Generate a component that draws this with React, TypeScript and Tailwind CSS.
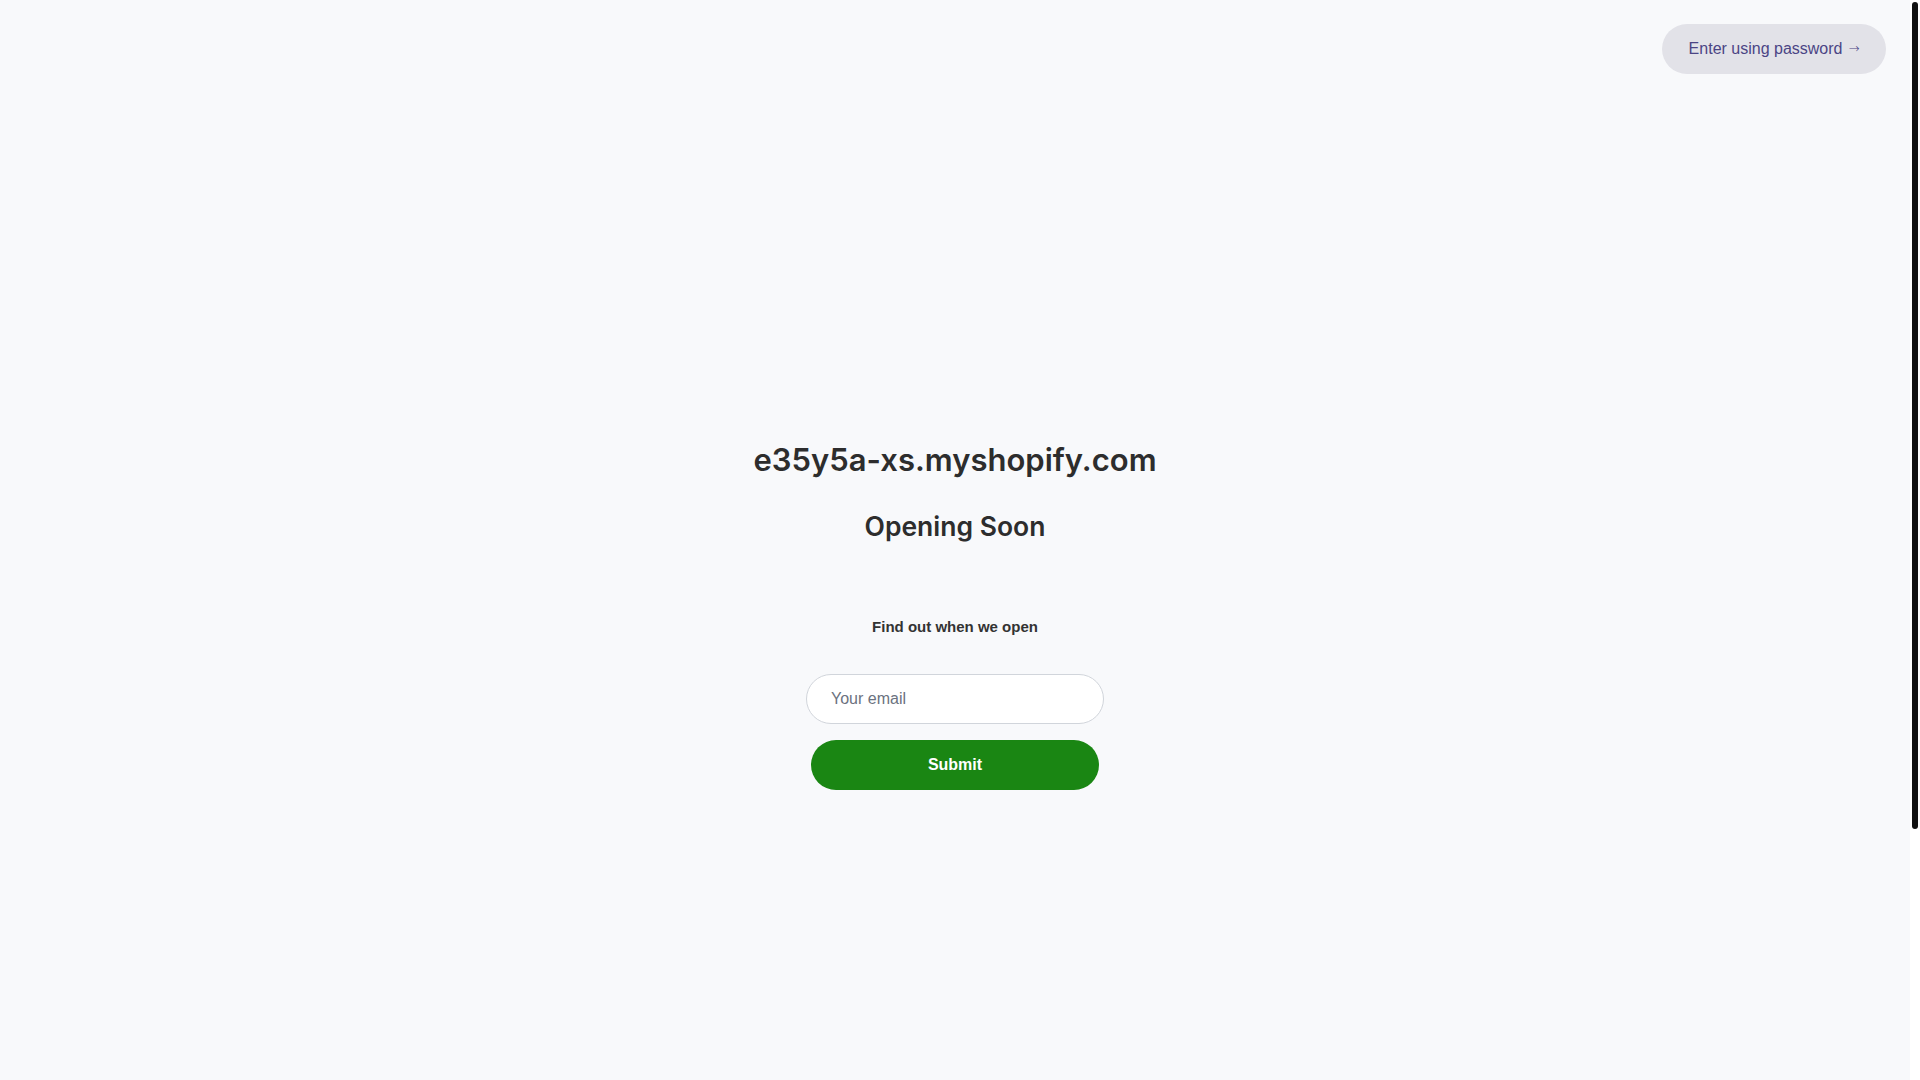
import React from 'react';

export default function App() {
  return (
    <div className="flex h-screen overflow-hidden bg-[#f8f9fb] font-['Liberation_Sans',Arial,sans-serif]">
      <div className="flex-1">
        {/* Top bar */}
        <header className="flex justify-end px-6 pt-6">
          <button className="flex h-[50px] w-[224px] items-center justify-center gap-[6px] rounded-full bg-[#e2e2e8] text-[16px] text-[#4b4585]">
            Enter using password
            <span className="font-['DejaVu_Sans',sans-serif] text-[13px] font-light">→</span>
          </button>
        </header>

        {/* Main */}
        <main className="flex flex-col items-center pt-[368px]">
          <h1 className="font-['Inter',sans-serif] text-[31px] font-semibold leading-[36px] text-[#2d2d2d]">
            e35y5a-xs.myshopify.com
          </h1>
          <h2 className="mt-[32px] font-['Inter',sans-serif] text-[26.5px] font-semibold leading-[32px] text-[#2d2d2d]">
            Opening Soon
          </h2>
          <p className="mt-[75px] text-[15px] font-bold leading-[20px] text-[#333]">Find out when we open</p>
          <form className="mt-[37px] flex flex-col items-center gap-[16px]" onSubmit={(e) => e.preventDefault()}>
            <input
              type="email"
              placeholder="Your email"
              className="h-[50px] w-[298px] rounded-full border border-[#d1d5db] bg-white px-6 text-[16px] text-[#333] outline-none placeholder:text-[#6b7280]"
            />
            <button className="h-[50px] w-[288px] rounded-full bg-[#1a8613] text-[16px] font-bold text-white">
              Submit
            </button>
          </form>
        </main>
      </div>

      {/* Scrollbar */}
      <div className="w-[10px] bg-white pl-[2px] pr-[2px] pt-[2px]">
        <div className="h-[827px] rounded-full bg-[#111]" />
      </div>
    </div>
  );
}
